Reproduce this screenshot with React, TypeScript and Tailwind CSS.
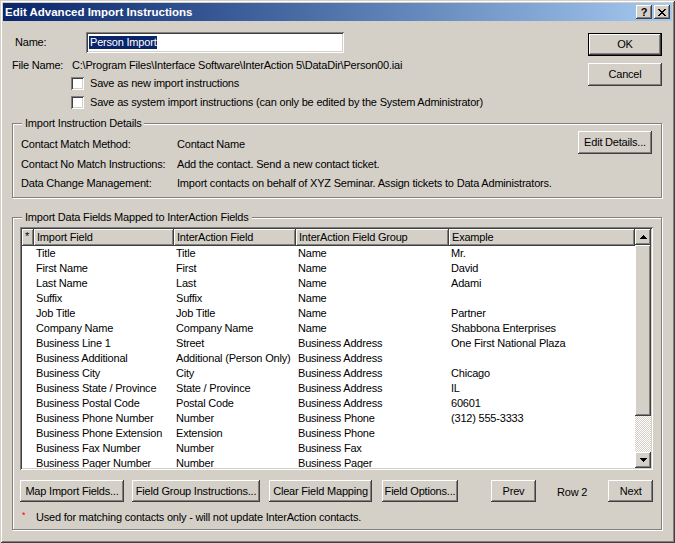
import React from 'react';

const raised =
    'bg-[#d4d0c8] shadow-[inset_-1px_-1px_#404040,inset_1px_1px_#fff,inset_-2px_-2px_#808080,inset_2px_2px_#d4d0c8]';
const sunken = 'shadow-[inset_1px_1px_#808080,inset_-1px_-1px_#fff,inset_2px_2px_#404040,inset_-2px_-2px_#d4d0c8]';
const header = 'bg-[#d4d0c8] shadow-[inset_-1px_-1px_#404040,inset_1px_1px_#fff,inset_-2px_-2px_#808080]';

const rows: [string, string, string, string][] = [
    ['Title', 'Title', 'Name', 'Mr.'],
    ['First Name', 'First', 'Name', 'David'],
    ['Last Name', 'Last', 'Name', 'Adami'],
    ['Suffix', 'Suffix', 'Name', ''],
    ['Job Title', 'Job Title', 'Name', 'Partner'],
    ['Company Name', 'Company Name', 'Name', 'Shabbona Enterprises'],
    ['Business Line 1', 'Street', 'Business Address', 'One First National Plaza'],
    ['Business Additional', 'Additional (Person Only)', 'Business Address', ''],
    ['Business City', 'City', 'Business Address', 'Chicago'],
    ['Business State / Province', 'State / Province', 'Business Address', 'IL'],
    ['Business Postal Code', 'Postal Code', 'Business Address', '60601'],
    ['Business Phone Number', 'Number', 'Business Phone', '(312) 555-3333'],
    ['Business Phone Extension', 'Extension', 'Business Phone', ''],
    ['Business Fax Number', 'Number', 'Business Fax', ''],
    ['Business Pager Number', 'Number', 'Business Pager', ''],
];

function Button({ label, className = '' }: { label: string; className?: string }) {
    return <div className={`${raised} flex shrink-0 items-center justify-center ${className}`}>{label}</div>;
}

function Checkbox({ label }: { label: string }) {
    return (
        <div className="flex h-[13px] items-center pl-[59px]">
            <div className={`${sunken} h-[13px] w-[13px] bg-white`} />
            <span className="ml-[6px]">{label}</span>
        </div>
    );
}

function Arrow({ up }: { up?: boolean }) {
    return (
        <div className={`${raised} flex h-[16px] w-[16px] items-center justify-center`}>
            <svg width="7" height="4" viewBox="0 0 7 4" className={up ? '' : 'rotate-180'}>
                <path d="M3 0h1v1h1v1h1v1h1v1H0V3h1V2h1V1h1z" fill="#000" />
            </svg>
        </div>
    );
}

function GroupBox({ title, className, children }: { title: string; className: string; children: React.ReactNode }) {
    return (
        <div className={`relative border border-[#808080] shadow-[inset_1px_1px_#fff,1px_1px_#fff] ${className}`}>
            <span className="absolute -top-[7px] left-[9px] bg-[#d4d0c8] px-[3px] leading-[13px]">{title}</span>
            {children}
        </div>
    );
}

export default function App() {
    return (
        <div className="h-[543px] w-[675px] bg-[#d4d0c8] p-[3px] font-['Liberation_Sans',Arial,sans-serif] text-[11px] leading-[13px] tracking-[-0.2px] text-black shadow-[inset_1px_1px_#d4d0c8,inset_-1px_-1px_#404040,inset_2px_2px_#fff,inset_-2px_-2px_#808080]">
            {/* ── Title bar ─────────────────────────────────── */}
            <div className="flex h-[18px] items-center bg-gradient-to-r from-[#0a246a] to-[#a6caf0] pr-[2px] pl-[2px]">
                <span className="flex-1 text-[11.5px] font-bold tracking-normal text-white">Edit Advanced Import Instructions</span>
                <div className={`${raised} flex h-[14px] w-[16px] items-center justify-center text-[11px] font-bold`}>?</div>
                <div className={`${raised} ml-[2px] flex h-[14px] w-[16px] items-center justify-center`}>
                    <svg width="8" height="7" viewBox="0 0 8 7">
                        <path d="M0 0h2v1h1v1h2V1h1V0h2v1H7v1H6v1H5v1h1v1h1v1h1v1H6V6H5V5H3v1H2v1H0V6h1V5h1V4h1V3H2V2H1V1H0z" fill="#000" />
                    </svg>
                </div>
            </div>

            <div className="pr-[10px] pl-[9px]">
                {/* ── Name / file / options ───────────────────── */}
                <div className="flex h-[102px]">
                    <div className="flex-1">
                        <div className="mt-[11px] flex h-[21px] items-center">
                            <span className="w-[74px] pl-[3px]">Name:</span>
                            <div className={`${sunken} flex h-[21px] w-[258px] items-center bg-white pl-[3px]`}>
                                <span className="bg-[#0a246a] px-[1px] text-white">Person Import</span>
                            </div>
                        </div>
                        <div className="mt-[5px] flex h-[14px] items-center">
                            <span className="w-[60px]">File Name:</span>
                            <span>C:\Program Files\Interface Software\InterAction 5\DataDir\Person00.iai</span>
                        </div>
                        <div className="mt-[5px]">
                            <Checkbox label="Save as new import instructions" />
                        </div>
                        <div className="mt-[6px]">
                            <Checkbox label="Save as system import instructions (can only be edited by the System Administrator)" />
                        </div>
                    </div>
                    <div className="w-[74px]">
                        <div className="mt-[12px] border border-black">
                            <Button label="OK" className="h-[21px]" />
                        </div>
                        <Button label="Cancel" className="mt-[7px] h-[23px]" />
                    </div>
                </div>

                {/* ── Import Instruction Details ──────────────── */}
                <GroupBox title="Import Instruction Details" className="h-[75px]">
                    <div className="flex">
                        <div className="flex-1 pt-[11px] pl-[8px]">
                            {[
                                ['Contact Match Method:', 'Contact Name'],
                                ['Contact No Match Instructions:', 'Add the contact. Send a new contact ticket.'],
                                ['Data Change Management:', 'Import contacts on behalf of XYZ Seminar. Assign tickets to Data Administrators.'],
                            ].map(([k, v]) => (
                                <div key={k} className="flex h-[19.5px] items-center">
                                    <span className="w-[156px]">{k}</span>
                                    <span>{v}</span>
                                </div>
                            ))}
                        </div>
                        <Button label="Edit Details..." className="mt-[7px] mr-[9px] h-[23px] w-[74px]" />
                    </div>
                </GroupBox>

                {/* ── Mapped fields ───────────────────────────── */}
                <GroupBox title="Import Data Fields Mapped to InterAction Fields" className="mt-[19px] h-[313px]">
                    <div className={`${sunken} mt-[9px] mr-[8px] ml-[7px] flex h-[243px] bg-white p-[2px]`}>
                        <div className="flex-1 overflow-hidden">
                            <div className="grid h-[17px] grid-cols-[12px_140px_122px_153px_1fr]">
                                <div className={`${header} pl-[3px] leading-[15px]`}>*</div>
                                <div className={`${header} pl-[3px] leading-[16px]`}>Import Field</div>
                                <div className={`${header} pl-[3px] leading-[16px]`}>InterAction Field</div>
                                <div className={`${header} pl-[3px] leading-[16px]`}>InterAction Field Group</div>
                                <div className={`${header} pl-[3px] leading-[16px]`}>Example</div>
                            </div>
                            {rows.map((r) => (
                                <div key={r[0]} className="grid h-[15px] grid-cols-[12px_140px_122px_153px_1fr] items-center">
                                    <div />
                                    {r.map((c, i) => (
                                        <div key={i} className="truncate pl-[2px]">
                                            {c}
                                        </div>
                                    ))}
                                </div>
                            ))}
                        </div>
                        <div className="flex w-[16px] flex-col">
                            <Arrow up />
                            <div className={`${raised} h-[171px]`} />
                            <div className="flex-1 bg-[repeating-conic-gradient(#fff_0_25%,#d4d0c8_0_50%)] bg-[length:2px_2px]" />
                            <Arrow />
                        </div>
                    </div>

                    <div className="mt-[10px] ml-[7px] flex h-[22px] items-stretch">
                        <Button label="Map Import Fields..." className="w-[104px]" />
                        <Button label="Field Group Instructions..." className="ml-[8px] w-[128px]" />
                        <Button label="Clear Field Mapping" className="ml-[9px] w-[103px]" />
                        <Button label="Field Options..." className="ml-[10px] w-[76px]" />
                        <Button label="Prev" className="ml-[33px] w-[45px]" />
                        <span className="ml-[21px] self-center pt-[2px]">Row 2</span>
                        <Button label="Next" className="ml-[21px] w-[45px]" />
                    </div>

                    <div className="mt-[8px] ml-[9px] flex h-[14px] items-center">
                        <span className="w-[14px] pb-[3px] text-[9px] text-[#ff0000]">*</span>
                        <span>Used for matching contacts only - will not update InterAction contacts.</span>
                    </div>
                </GroupBox>
            </div>
        </div>
    );
}
